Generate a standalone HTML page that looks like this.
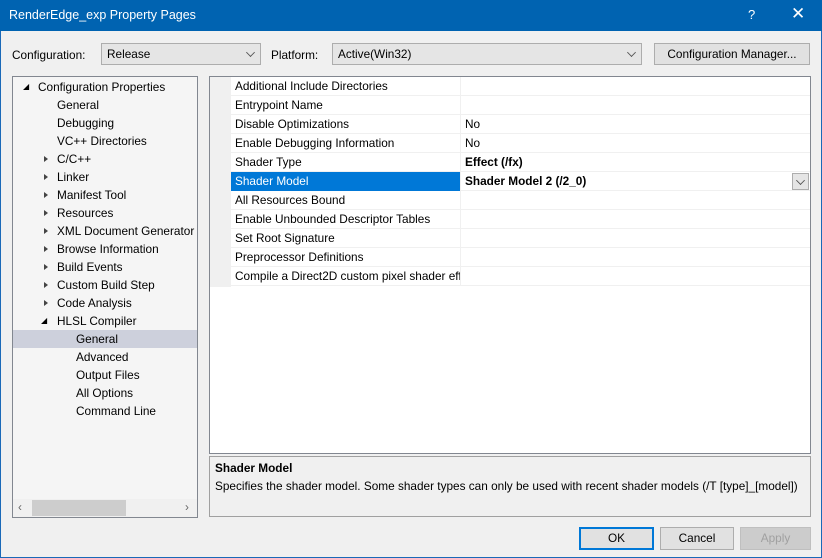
<!DOCTYPE html>
<html><head><style>
*{margin:0;padding:0;box-sizing:border-box}
body{width:822px;height:558px;background:#f0f0f0;font-family:"Liberation Sans",sans-serif;font-size:11.8px;color:#000;position:relative;overflow:hidden}
.win{position:absolute;left:0;top:0;width:822px;height:558px;border:1px solid #1a69b8}
.title{position:absolute;left:0;top:0;width:822px;height:31px;background:#0063b1;color:#fff;font-size:12.5px}
.abs{position:absolute;white-space:nowrap}
.combo{position:absolute;height:22px;border:1px solid #adadad;background:#e5e5e5;padding:3px 5px}
.chev{position:absolute;right:6px;top:5px;width:7px;height:7px;border-right:1px solid #555;border-bottom:1px solid #555;transform:rotate(45deg) scale(.9)}
.tree{position:absolute;left:12px;top:76px;width:186px;height:442px;border:1px solid #828790;background:#f5f5f5}
.ti{position:absolute;height:18px;line-height:18px;white-space:nowrap}
.tri{position:absolute;width:0;height:0;border-top:3px solid transparent;border-bottom:3px solid transparent;border-left:4px solid #444}
.grid{position:absolute;left:209px;top:76px;width:602px;height:378px;border:1px solid #828790;background:#fff}
.row{position:absolute;left:21px;width:579px;height:19px;border-bottom:1px solid #f0f0f0;line-height:18px}
.row .l{position:absolute;left:4px;width:225px;overflow:hidden;white-space:nowrap}
.row .v{position:absolute;left:229px;border-left:1px solid #f0f0f0;padding-left:4px;height:19px;width:350px}
.desc{position:absolute;left:209px;top:456px;width:602px;height:61px;border:1px solid #a0a0a0;background:#f0f0f0;padding:4px 5px}
.btn{position:absolute;top:527px;height:23px;border:1px solid #adadad;background:#e1e1e1;text-align:center;line-height:21px}
</style></head><body>
<div class="win"></div>
<div class="title"><span class="abs" style="left:9px;top:8px">RenderEdge_exp Property Pages</span><span class="abs" style="left:748px;top:7px;font-size:13px">?</span><span class="abs" style="left:791px;top:4px;font-size:17px">✕</span></div>
<span class="abs" style="left:12px;top:48px">Configuration:</span>
<div class="combo" style="left:101px;top:43px;width:160px">Release<span class="chev"></span></div>
<span class="abs" style="left:271px;top:48px">Platform:</span>
<div class="combo" style="left:332px;top:43px;width:310px">Active(Win32)<span class="chev"></span></div>
<div class="combo" style="left:654px;top:43px;width:156px;text-align:center;background:#e1e1e1">Configuration Manager...</div>
<div class="tree">
<div class="ti" style="left:10px;top:1px"><span style="position:absolute;left:0;top:0;font-size:8px">◢</span></div>
<div class="ti" style="left:25px;top:1px">Configuration Properties</div>
<div class="ti" style="left:44px;top:19px">General</div>
<div class="ti" style="left:44px;top:37px">Debugging</div>
<div class="ti" style="left:44px;top:55px">VC++ Directories</div>
<div class="ti" style="left:44px;top:73px">C/C++</div><span class="tri" style="left:31px;top:79px"></span>
<div class="ti" style="left:44px;top:91px">Linker</div><span class="tri" style="left:31px;top:97px"></span>
<div class="ti" style="left:44px;top:109px">Manifest Tool</div><span class="tri" style="left:31px;top:115px"></span>
<div class="ti" style="left:44px;top:127px">Resources</div><span class="tri" style="left:31px;top:133px"></span>
<div class="ti" style="left:44px;top:145px">XML Document Generator</div><span class="tri" style="left:31px;top:151px"></span>
<div class="ti" style="left:44px;top:163px">Browse Information</div><span class="tri" style="left:31px;top:169px"></span>
<div class="ti" style="left:44px;top:181px">Build Events</div><span class="tri" style="left:31px;top:187px"></span>
<div class="ti" style="left:44px;top:199px">Custom Build Step</div><span class="tri" style="left:31px;top:205px"></span>
<div class="ti" style="left:44px;top:217px">Code Analysis</div><span class="tri" style="left:31px;top:223px"></span>
<div class="ti" style="left:28px;top:235px;font-size:8px">◢</div>
<div class="ti" style="left:44px;top:235px">HLSL Compiler</div>
<div class="ti" style="left:0;top:253px;width:184px;background:#cdd0dc"></div>
<div class="ti" style="left:63px;top:253px">General</div>
<div class="ti" style="left:63px;top:271px">Advanced</div>
<div class="ti" style="left:63px;top:289px">Output Files</div>
<div class="ti" style="left:63px;top:307px">All Options</div>
<div class="ti" style="left:63px;top:325px">Command Line</div>
<div style="position:absolute;left:0;top:422px;width:184px;height:18px;background:#f0f0f0"></div>
<div style="position:absolute;left:19px;top:423px;width:94px;height:16px;background:#cdcdcd"></div>
<span class="abs" style="left:5px;top:423px;color:#666">‹</span><span class="abs" style="left:172px;top:423px;color:#666">›</span>
</div>
<div class="grid">
<div style="position:absolute;left:0;top:0;width:21px;height:210px;background:#f0f0f0"></div>
<div class="row" style="top:0"><span class="l">Additional Include Directories</span><span class="v"></span></div>
<div class="row" style="top:19px"><span class="l">Entrypoint Name</span><span class="v"></span></div>
<div class="row" style="top:38px"><span class="l">Disable Optimizations</span><span class="v">No</span></div>
<div class="row" style="top:57px"><span class="l">Enable Debugging Information</span><span class="v">No</span></div>
<div class="row" style="top:76px"><span class="l">Shader Type</span><span class="v" style="font-weight:bold">Effect (/fx)</span></div>
<div class="row" style="top:95px"><span class="l" style="left:0;padding-left:4px;width:229px;background:#0078d7;color:#fff;height:19px">Shader Model</span><span class="v" style="font-weight:bold">Shader Model 2 (/2_0)<span style="position:absolute;right:1px;top:1px;width:17px;height:17px;border:1px solid #adadad;background:#e5e5e5"><span class="chev" style="right:4px;top:3px"></span></span></span></div>
<div class="row" style="top:114px"><span class="l">All Resources Bound</span><span class="v"></span></div>
<div class="row" style="top:133px"><span class="l">Enable Unbounded Descriptor Tables</span><span class="v"></span></div>
<div class="row" style="top:152px"><span class="l">Set Root Signature</span><span class="v"></span></div>
<div class="row" style="top:171px"><span class="l">Preprocessor Definitions</span><span class="v"></span></div>
<div class="row" style="top:190px"><span class="l">Compile a Direct2D custom pixel shader effect</span><span class="v"></span></div>
</div>
<div class="desc"><div style="font-weight:bold">Shader Model</div><div style="margin-top:4px;white-space:nowrap">Specifies the shader model. Some shader types can only be used with recent shader models (/T [type]_[model])</div></div>
<div class="btn" style="left:579px;width:75px;border:2px solid #0078d7;line-height:19px">OK</div>
<div class="btn" style="left:660px;width:74px">Cancel</div>
<div class="btn" style="left:740px;width:71px;color:#a0a0a0;background:#ccc;border-color:#bfbfbf">Apply</div>
</body></html>
